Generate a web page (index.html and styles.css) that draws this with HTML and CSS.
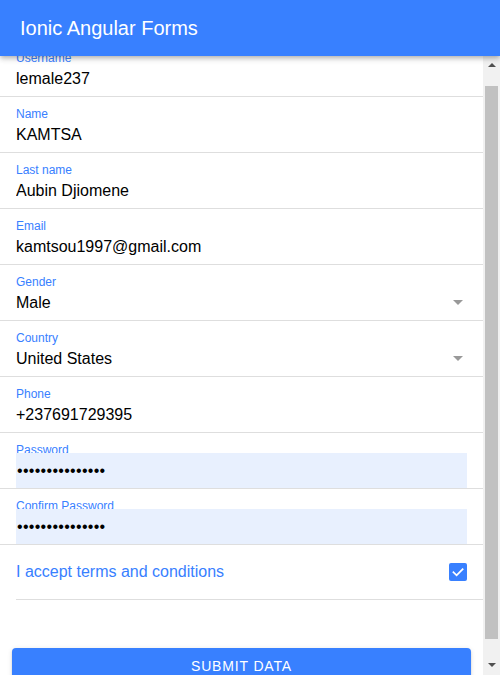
FILE: index.html
```html
<!DOCTYPE html>
<html lang="en">
<head>
<meta charset="utf-8">
<title>Ionic Angular Forms</title>
<link rel="stylesheet" href="styles.css">
</head>
<body>
<div class="app">
  <header class="toolbar">
    <h1 class="title">Ionic Angular Forms</h1>
  </header>
  <div class="body-row">
    <main class="content">
      <form class="form">
        <div class="list">
          <div class="item">
            <label class="label">Username</label>
            <input class="field" type="text" value="lemale237">
          </div>
          <div class="item">
            <label class="label">Name</label>
            <input class="field" type="text" value="KAMTSA">
          </div>
          <div class="item">
            <label class="label">Last name</label>
            <input class="field" type="text" value="Aubin Djiomene">
          </div>
          <div class="item">
            <label class="label">Email</label>
            <input class="field" type="email" value="kamtsou1997@gmail.com">
          </div>
          <div class="item">
            <label class="label">Gender</label>
            <div class="select">
              <span class="select-text">Male</span>
              <span class="select-icon"></span>
            </div>
          </div>
          <div class="item">
            <label class="label">Country</label>
            <div class="select">
              <span class="select-text">United States</span>
              <span class="select-icon"></span>
            </div>
          </div>
          <div class="item">
            <label class="label">Phone</label>
            <input class="field" type="tel" value="+237691729395">
          </div>
          <div class="item">
            <label class="label">Password</label>
            <input class="field field-filled" type="password" value="kamtsou19970000">
          </div>
          <div class="item">
            <label class="label">Confirm Password</label>
            <input class="field field-filled" type="password" value="kamtsou19970000">
          </div>
          <div class="item-check">
            <div class="item-check-inner">
              <span class="check-label">I accept terms and conditions</span>
              <span class="checkbox">
                <svg viewBox="0 0 18 18" width="18" height="18" aria-hidden="true">
                  <path d="M4.5 9.3 L7.6 12.3 L13.6 6.2" fill="none" stroke="#ffffff" stroke-width="1.8" stroke-linecap="square"/>
                </svg>
              </span>
            </div>
          </div>
        </div>
        <div class="actions">
          <button type="button" class="submit">Submit Data</button>
        </div>
      </form>
    </main>
    <div class="scrollbar" aria-hidden="true">
      <div class="sb-btn sb-btn-up"><span class="sb-arrow-up"></span></div>
      <div class="sb-track"><div class="sb-thumb"></div></div>
      <div class="sb-btn sb-btn-down"><span class="sb-arrow-down"></span></div>
    </div>
  </div>
</div>
<script src="script.js"></script>
</body>
</html>
```

FILE: styles.css
```css
* {
  box-sizing: border-box;
}

html, body {
  margin: 0;
  padding: 0;
  height: 100%;
}

body {
  font-family: "Liberation Sans", Arial, sans-serif;
  color: #000;
  background: #fff;
}

.app {
  height: 675px;
  display: flex;
  flex-direction: column;
}

.toolbar {
  position: relative;
  z-index: 2;
  flex: 0 0 56px;
  height: 56px;
  background: #3880ff;
  display: flex;
  align-items: center;
  padding: 0 20px;
  box-shadow: 0 2px 4px -1px rgba(0, 0, 0, 0.2), 0 4px 5px 0 rgba(0, 0, 0, 0.10), 0 1px 8px 0 rgba(0, 0, 0, 0.08);
}

.title {
  margin: 0;
  font-size: 20px;
  font-weight: normal;
  color: #fff;
  letter-spacing: 0;
}

.body-row {
  flex: 1 1 auto;
  min-height: 0;
  display: flex;
}

.content {
  flex: 1 1 auto;
  min-width: 0;
  overflow: hidden;
  background: #fff;
}

/* scrollbar */
.scrollbar {
  flex: 0 0 17px;
  width: 17px;
  background: #f1f1f1;
  display: flex;
  flex-direction: column;
}

.sb-btn {
  flex: 0 0 17px;
  height: 17px;
  display: flex;
  justify-content: center;
  align-items: flex-start;
}

.sb-btn-up {
  padding-top: 7px;
}

.sb-btn-down {
  padding-top: 5px;
}

.sb-arrow-up {
  width: 0;
  height: 0;
  border-bottom: 4px solid #505050;
  border-left: 4px solid transparent;
  border-right: 4px solid transparent;
}

.sb-arrow-down {
  width: 0;
  height: 0;
  border-top: 4px solid #505050;
  border-left: 4px solid transparent;
  border-right: 4px solid transparent;
}

.sb-track {
  flex: 1 1 auto;
  padding: 13px 2px 0;
}

.sb-thumb {
  height: 553px;
  background: #c1c1c1;
}

.form {
  margin: 0;
  padding-bottom: 15px;
}

.list {
  display: flex;
  flex-direction: column;
}

.item {
  height: 56px;
  border-bottom: 1px solid #dedede;
  padding: 0 16px;
  display: flex;
  flex-direction: column;
}

.label {
  display: block;
  margin-top: 10px;
  font-size: 12px;
  line-height: 14px;
  color: #3880ff;
  white-space: nowrap;
}

.field {
  display: block;
  margin: -4px 0 0;
  width: 100%;
  height: 35px;
  padding: 0;
  border: 0;
  outline: none;
  background: transparent;
  font-family: "Liberation Sans", Arial, sans-serif;
  font-size: 16px;
  color: #000;
}

.field-filled {
  background: #e8f0fe;
  padding-left: 1px;
  letter-spacing: 0.3px;
}

.select {
  margin-top: -4px;
  height: 35px;
  display: flex;
  align-items: center;
  justify-content: space-between;
  font-size: 16px;
}

.select-icon {
  width: 0;
  height: 0;
  margin-right: 4px;
  border-top: 5px solid #999;
  border-left: 5px solid transparent;
  border-right: 5px solid transparent;
}

.item-check {
  padding-left: 16px;
}

.item-check-inner {
  height: 55px;
  padding-right: 16px;
  border-bottom: 1px solid #dedede;
  display: flex;
  align-items: center;
  justify-content: space-between;
}

.check-label {
  font-size: 16px;
  color: #3880ff;
}

.checkbox {
  width: 18px;
  height: 18px;
  border-radius: 2px;
  background: #3880ff;
  display: flex;
}

.actions {
  padding: 48px 12px 0;
}

.submit {
  display: block;
  width: 100%;
  height: 36px;
  border: 0;
  border-radius: 4px;
  background: #3880ff;
  color: #fff;
  font-family: "Liberation Sans", Arial, sans-serif;
  font-size: 14px;
  letter-spacing: 0.06em;
  text-transform: uppercase;
  box-shadow: 0 3px 1px -2px rgba(0, 0, 0, 0.2), 0 2px 2px 0 rgba(0, 0, 0, 0.14), 0 1px 5px 0 rgba(0, 0, 0, 0.12);
}
```

FILE: script.js
```js
document.querySelector('.content').scrollTop = 15;
```
